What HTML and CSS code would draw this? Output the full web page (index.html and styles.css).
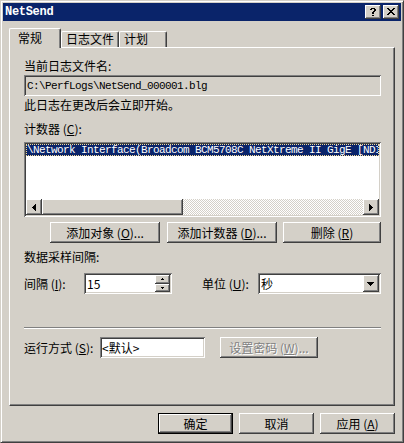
FILE: index.html
```html
<!DOCTYPE html>
<html lang="zh-CN">
<head>
<meta charset="utf-8">
<title>NetSend</title>
<link rel="stylesheet" href="styles.css">
</head>
<body>
<div class="window">
  <div class="titlebar">
    <span class="title">NetSend</span>
    <div class="caption-btns">
      <span class="cap-btn raised"><svg width="16" height="14" viewBox="0 0 16 14"><path fill="#000" d="M6 3h4v1h-4z M5 4h2v1h-2z M9 4h2v1h-2z M9 5h2v1h-2z M8 6h2v1h-2z M7 7h2v1h-2z M7 8h2v1h-2z M7 10h2v1h-2z"/></svg></span>
      <span class="cap-btn raised"><svg width="16" height="14" viewBox="0 0 16 14"><path fill="#000" d="M4 3h2v1h-2z M10 3h2v1h-2z M5 4h2v1h-2z M9 4h2v1h-2z M6 5h4v1h-4z M7 6h2v1h-2z M6 7h4v1h-4z M5 8h2v1h-2z M9 8h2v1h-2z M4 9h2v1h-2z M10 9h2v1h-2z"/></svg></span>
    </div>
  </div>
  <div class="client">
    <div class="tabs">
      <div class="tab tab-active">常规</div>
      <div class="tab tab-log">日志文件</div>
      <div class="tab tab-plan">计划</div>
    </div>
    <div class="panel">
      <div class="label l-file">当前日志文件名:</div>
      <div class="edit sunken readonly path"><span class="mono">C:\PerfLogs\NetSend_000001.blg</span></div>
      <div class="label l-note">此日志在更改后会立即开始。</div>
      <div class="label l-counters">计数器 (<u>C</u>):</div>
      <div class="listbox sunken">
        <div class="list-items">
          <div class="list-item selected mono">\Network Interface(Broadcom BCM5708C NetXtreme II GigE [NDIS VBD Client])\Bytes Total/sec</div>
        </div>
        <div class="hscroll">
          <span class="sb-btn raised"><svg width="16" height="16" viewBox="0 0 16 16"><path fill="#000" d="M6 8h1v1h-1z M7 7h1v3h-1z M8 6h1v5h-1z M9 5h1v7h-1z"/></svg></span>
          <span class="sb-thumb raised"></span>
          <span class="sb-track"></span>
          <span class="sb-btn raised"><svg width="16" height="16" viewBox="0 0 16 16"><path fill="#000" d="M6 5h1v7h-1z M7 6h1v5h-1z M8 7h1v3h-1z M9 8h1v1h-1z"/></svg></span>
        </div>
      </div>
      <div class="btn-row">
        <button class="btn raised w-add-obj">添加对象 (<u>O</u>)...</button>
        <button class="btn raised w-add-cnt">添加计数器 (<u>D</u>)...</button>
        <button class="btn raised w-del">删除 (<u>R</u>)</button>
      </div>
      <div class="label l-interval">数据采样间隔:</div>
      <div class="row row-interval">
        <span class="label lbl-int">间隔 (<u>I</u>):</span>
        <div class="spin sunken">
          <span class="spin-text">15</span>
          <span class="updown">
            <span class="ud-btn ud-up raised"><svg width="15" height="9" viewBox="0 0 15 9"><path fill="#000" d="M7 3h1v1h-1z M6 4h3v1h-3z"/></svg></span>
            <span class="ud-btn ud-down raised"><svg width="15" height="8" viewBox="0 0 15 8"><path fill="#000" d="M6 3h3v1h-3z M7 4h1v1h-1z"/></svg></span>
          </span>
        </div>
        <span class="label lbl-unit">单位 (<u>U</u>):</span>
        <div class="combo sunken">
          <span class="combo-text">秒</span>
          <span class="dd-btn raised"><svg width="16" height="17" viewBox="0 0 16 17"><path fill="#000" d="M4 7h7v1h-7z M5 8h5v1h-5z M6 9h3v1h-3z M7 10h1v1h-1z"/></svg></span>
        </div>
      </div>
      <div class="sep"></div>
      <div class="row row-run">
        <span class="label lbl-run">运行方式 (<u>S</u>):</span>
        <div class="edit sunken run-edit">&lt;默认&gt;</div>
        <button class="btn raised disabled w-pwd">设置密码 (<u>W</u>)...</button>
      </div>
    </div>
    <div class="dlg-btns">
      <button class="btn default">确定</button>
      <button class="btn raised">取消</button>
      <button class="btn raised">应用 (<u>A</u>)</button>
    </div>
  </div>
</div>
</body>
</html>
```

FILE: styles.css
```css
* { box-sizing: border-box; }
html, body { margin: 0; padding: 0; }
body {
  width: 404px;
  height: 443px;
  overflow: hidden;
  background: #d4d0c8;
  color: #000;
  font: 12px/14px "Noto Sans CJK SC", "Noto Sans", sans-serif;
}
svg { display: block; }
u { text-decoration: underline; text-underline-offset: 1px; }

.window {
  width: 404px;
  height: 443px;
  border: 1px solid;
  border-color: #d4d0c8 #404040 #404040 #d4d0c8;
  box-shadow: inset 1px 1px #fff, inset -1px -1px #808080;
  padding: 2px;
  background: #d4d0c8;
  display: flex;
  flex-direction: column;
}

.raised {
  background: #d4d0c8;
  box-shadow: inset -1px -1px #404040, inset 1px 1px #fff, inset -2px -2px #808080;
}
.sunken {
  box-shadow: inset 1px 1px #808080, inset -1px -1px #fff, inset 2px 2px #404040, inset -2px -2px #d4d0c8;
}

.titlebar {
  height: 18px;
  flex: none;
  background: #0a246a;
  display: flex;
  align-items: center;
  justify-content: space-between;
  padding: 0 2px 0 2px;
}
.title {
  color: #fff;
  font: bold 12px/18px "Liberation Mono", monospace;
  letter-spacing: -0.3px;
}
.caption-btns { display: flex; gap: 2px; }
.cap-btn { width: 16px; height: 14px; display: block; }

.client { display: flex; flex-direction: column; }

.tabs {
  margin-top: 7px;
  margin-left: 6px;
  height: 19px;
  display: flex;
  align-items: flex-end;
}
.tab {
  height: 16px;
  border-left: 1px solid #fff;
  border-top: 1px solid #fff;
  border-right: 1px solid #404040;
  box-shadow: inset -1px 0 #808080;
  border-radius: 2px 2px 0 0;
  padding: 0 0 0 4px;
  line-height: 14px;
  white-space: nowrap;
  background: #d4d0c8;
}
.tab-active {
  width: 52px;
  height: 20px;
  margin-bottom: -1px;
  padding: 2px 0 0 8px;
  position: relative;
  z-index: 1;
}
.tab-log { width: 58px; }
.tab-plan { width: 48px; }

.panel {
  width: 386px;
  height: 359px;
  margin-left: 6px;
  border-top: 1px solid #fff;
  border-left: 1px solid #fff;
  border-right: 1px solid #404040;
  border-bottom: 1px solid #404040;
  box-shadow: inset -1px -1px #808080;
  padding: 0 13px 0 14px;
  display: flex;
  flex-direction: column;
}

.label { line-height: 14px; white-space: nowrap; }
.l-file { margin-top: 11px; }
.l-note { margin-top: 2px; }
.l-counters { margin-top: 10px; }
.l-interval { margin-top: 7px; }

.mono {
  font: 11px/12px "Liberation Mono", monospace;
  letter-spacing: -0.6px;
  white-space: nowrap;
}

.edit {
  height: 21px;
  display: flex;
  align-items: center;
  padding: 2px 3px 2px 3px;
  background: #fff;
  white-space: nowrap;
  overflow: hidden;
}
.readonly { background: #d4d0c8; }
.path { margin-top: 2px; width: 357px; }

.listbox {
  margin-top: 6px;
  width: 357px;
  height: 75px;
  background: #fff;
  padding: 2px;
  display: flex;
  flex-direction: column;
}
.list-items { flex: 1; overflow: hidden; }
.list-item {
  height: 12px;
  line-height: 10px;
  overflow: hidden;
  color: #fff;
}
.selected {
  background: #0a246a;
  border: 1px dotted #f5db95;
}
.hscroll { height: 16px; display: flex; flex: none; }
.sb-btn { width: 16px; height: 16px; flex: none; }
.sb-thumb { width: 141px; height: 16px; flex: none; }
.sb-track {
  flex: 1;
  height: 16px;
  background: repeating-conic-gradient(#fff 0 25%, #d4d0c8 0 50%) 0 0 / 2px 2px;
}

.btn {
  font: inherit;
  color: #000;
  border: none;
  padding: 0;
  margin: 0;
  height: 21px;
  width: 75px;
  display: flex;
  align-items: center;
  justify-content: center;
  line-height: 14px;
  white-space: nowrap;
}
.btn.default {
  background: #d4d0c8;
  box-shadow: inset 0 0 0 1px #000, inset -2px -2px #404040, inset 2px 2px #fff, inset -3px -3px #808080;
}
.btn.disabled { color: #808080; text-shadow: 1px 1px #fff; }

.btn-row {
  margin-top: 5px;
  display: flex;
  justify-content: flex-end;
  gap: 7px;
}
.w-add-obj { width: 110px; }
.w-add-cnt { width: 110px; }
.w-del { width: 98px; margin-left: -1px; }

.row { display: flex; align-items: center; height: 21px; }
.row-interval { margin-top: 9px; }
.lbl-int { width: 60px; }
.spin {
  width: 88px;
  height: 21px;
  background: #fff;
  padding: 2px;
  display: flex;
}
.spin-text { flex: 1; line-height: 17px; padding-left: 1px; }
.updown { width: 15px; display: flex; flex-direction: column; }
.ud-up { height: 9px; }
.ud-down { height: 8px; }
.lbl-unit { width: 56px; margin-left: 30px; }
.combo {
  width: 123px;
  height: 21px;
  background: #fff;
  padding: 2px;
  display: flex;
}
.combo-text { flex: 1; line-height: 17px; padding-left: 1px; }
.dd-btn { width: 16px; height: 17px; }

.sep {
  margin-top: 33px;
  height: 2px;
  width: 357px;
  border-top: 1px solid #808080;
  border-bottom: 1px solid #fff;
}
.row-run { margin-top: 8px; }
.lbl-run { width: 76px; }
.run-edit { width: 105px; padding-left: 2px; }
.w-pwd { width: 98px; margin-left: 15px; }

.dlg-btns {
  margin-top: 7px;
  padding-right: 6px;
  display: flex;
  justify-content: flex-end;
  gap: 6px;
}
```
